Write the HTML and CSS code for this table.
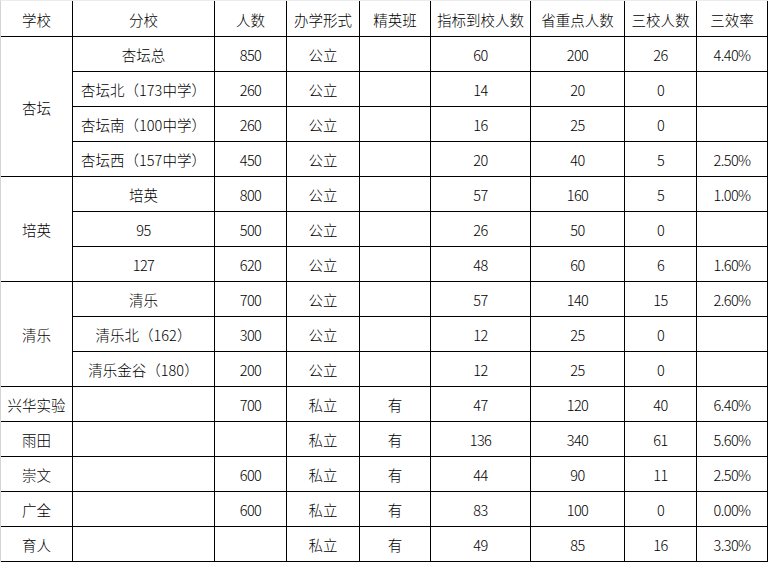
FILE: index.html
```html
<!DOCTYPE html>
<html lang="zh">
<head>
<meta charset="utf-8">
<title>学校数据</title>
<link rel="stylesheet" href="styles.css">
</head>
<body>
<div class="sheet">
  <div class="c">学校</div><div class="c">分校</div><div class="c">人数</div><div class="c">办学形式</div><div class="c">精英班</div><div class="c">指标到校人数</div><div class="c">省重点人数</div><div class="c">三校人数</div><div class="c">三效率</div>

  <div class="c span4">杏坛</div><div class="c">杏坛总</div><div class="c n">850</div><div class="c">公立</div><div class="c"></div><div class="c n">60</div><div class="c n">200</div><div class="c n">26</div><div class="c n">4.40%</div>
  <div class="c">杏坛北（173中学）</div><div class="c n">260</div><div class="c">公立</div><div class="c"></div><div class="c n">14</div><div class="c n">20</div><div class="c n">0</div><div class="c"></div>
  <div class="c">杏坛南（100中学）</div><div class="c n">260</div><div class="c">公立</div><div class="c"></div><div class="c n">16</div><div class="c n">25</div><div class="c n">0</div><div class="c"></div>
  <div class="c">杏坛西（157中学）</div><div class="c n">450</div><div class="c">公立</div><div class="c"></div><div class="c n">20</div><div class="c n">40</div><div class="c n">5</div><div class="c n">2.50%</div>

  <div class="c span3">培英</div><div class="c">培英</div><div class="c n">800</div><div class="c">公立</div><div class="c"></div><div class="c n">57</div><div class="c n">160</div><div class="c n">5</div><div class="c n">1.00%</div>
  <div class="c n">95</div><div class="c n">500</div><div class="c">公立</div><div class="c"></div><div class="c n">26</div><div class="c n">50</div><div class="c n">0</div><div class="c"></div>
  <div class="c n">127</div><div class="c n">620</div><div class="c">公立</div><div class="c"></div><div class="c n">48</div><div class="c n">60</div><div class="c n">6</div><div class="c n">1.60%</div>

  <div class="c span3">清乐</div><div class="c">清乐</div><div class="c n">700</div><div class="c">公立</div><div class="c"></div><div class="c n">57</div><div class="c n">140</div><div class="c n">15</div><div class="c n">2.60%</div>
  <div class="c">清乐北（162）</div><div class="c n">300</div><div class="c">公立</div><div class="c"></div><div class="c n">12</div><div class="c n">25</div><div class="c n">0</div><div class="c"></div>
  <div class="c">清乐金谷（180）</div><div class="c n">200</div><div class="c">公立</div><div class="c"></div><div class="c n">12</div><div class="c n">25</div><div class="c n">0</div><div class="c"></div>

  <div class="c">兴华实验</div><div class="c"></div><div class="c n">700</div><div class="c">私立</div><div class="c">有</div><div class="c n">47</div><div class="c n">120</div><div class="c n">40</div><div class="c n">6.40%</div>
  <div class="c">雨田</div><div class="c"></div><div class="c"></div><div class="c">私立</div><div class="c">有</div><div class="c n">136</div><div class="c n">340</div><div class="c n">61</div><div class="c n">5.60%</div>
  <div class="c">崇文</div><div class="c"></div><div class="c n">600</div><div class="c">私立</div><div class="c">有</div><div class="c n">44</div><div class="c n">90</div><div class="c n">11</div><div class="c n">2.50%</div>
  <div class="c">广全</div><div class="c"></div><div class="c n">600</div><div class="c">私立</div><div class="c">有</div><div class="c n">83</div><div class="c n">100</div><div class="c n">0</div><div class="c n">0.00%</div>
  <div class="c">育人</div><div class="c"></div><div class="c"></div><div class="c">私立</div><div class="c">有</div><div class="c n">49</div><div class="c n">85</div><div class="c n">16</div><div class="c n">3.30%</div>
</div>
</body>
</html>
```
FILE: styles.css
```css
html, body {
  margin: 0;
  padding: 0;
  background: #ffffff;
}

.sheet {
  display: grid;
  grid-template-columns: 72px 142px 72px 73px 71px 100px 94px 72px 71px;
  grid-template-rows: 36px;
  grid-auto-rows: 35px;
  width: 767px;
  border-left: 1px solid #d4d4d4;
  border-top: 1px solid #ececec;
  font-family: "Noto Sans CJK SC", "Noto Sans", sans-serif;
  font-size: 14.5px;
  font-weight: 300;
  color: #000000;
}

.c {
  box-sizing: border-box;
  border-right: 1px solid #000000;
  border-bottom: 1px solid #000000;
  display: flex;
  align-items: center;
  justify-content: center;
  padding-top: 3px;
  white-space: nowrap;
  line-height: 1;
}

.n {
  letter-spacing: -0.6px;
}

.span4 {
  grid-row: span 4;
}

.span3 {
  grid-row: span 3;
}
```
